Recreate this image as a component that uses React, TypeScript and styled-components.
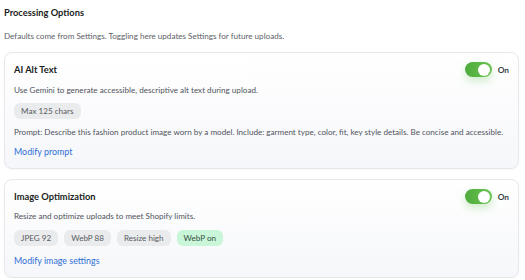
import React from "react";
import styled, { createGlobalStyle } from "styled-components";

const Global = createGlobalStyle`
  html, body { margin: 0; padding: 0; background: #ffffff; }
  body { font-family: Lato, "Noto Sans", sans-serif; color: #1f2328; }
  * { box-sizing: border-box; }
`;

const Page = styled.div`
  padding: 6px 6px 0 4px;
  display: flex;
  flex-direction: column;
`;

const Heading = styled.div`
  font-size: 9.3px;
  font-weight: 700;
  line-height: 14px;
  color: #1b1d21;
`;

const Sub = styled.div`
  margin-top: 10px;
  font-size: 8.1px;
  line-height: 13px;
  color: #5d6168;
`;

const Card = styled.div<{ $top: number }>`
  margin-top: ${(p) => p.$top}px;
  border: 1px solid #e6e8ec;
  border-radius: 8px;
  background: linear-gradient(180deg, #ffffff 0%, #f6f7fa 100%);
  box-shadow: 0 1px 2px rgba(20, 30, 50, 0.04);
  padding: 9px 9px 10px 9px;
  display: flex;
  flex-direction: column;
`;

const Header = styled.div`
  display: flex;
  align-items: center;
  justify-content: space-between;
  height: 15px;
`;

const Title = styled.div`
  font-size: 9.3px;
  font-weight: 700;
  color: #1b1d21;
`;

const ToggleWrap = styled.div`
  display: flex;
  align-items: center;
  gap: 6px;
`;

const Track = styled.div`
  position: relative;
  width: 27px;
  height: 15px;
  border-radius: 8px;
  background: linear-gradient(90deg, #4eab3c 0%, #6cc452 100%);
  box-shadow: 0 4px 8px rgba(90, 190, 70, 0.28);
`;

const Knob = styled.div`
  position: absolute;
  top: 1.5px;
  right: 1.5px;
  width: 12px;
  height: 12px;
  border-radius: 50%;
  background: #ffffff;
`;

const OnLabel = styled.span`
  font-size: 8.3px;
  font-weight: 700;
  color: #3a3f46;
`;

const Text = styled.div<{ $top: number }>`
  margin-top: ${(p) => p.$top}px;
  font-size: 8.1px;
  line-height: 13px;
  color: #50545b;
  white-space: nowrap;
`;

const Chips = styled.div<{ $top: number }>`
  margin-top: ${(p) => p.$top}px;
  display: flex;
  gap: 6px;
`;

const Chip = styled.span<{ $on?: boolean }>`
  display: inline-flex;
  align-items: center;
  height: 16px;
  padding: 0 7px;
  border-radius: 6px;
  font-size: 8.1px;
  background: ${(p) => (p.$on ? "#c9f5d8" : "#eaebed")};
  color: ${(p) => (p.$on ? "#35503f" : "#575b61")};
`;

const Link = styled.a<{ $top: number }>`
  margin-top: ${(p) => p.$top}px;
  font-size: 8.9px;
  line-height: 13px;
  color: #2f6fd6;
  text-decoration: none;
  align-self: flex-start;
`;

const Toggle = () => (
  <ToggleWrap>
    <Track>
      <Knob />
    </Track>
    <OnLabel>On</OnLabel>
  </ToggleWrap>
);

export default function App() {
  return (
    <>
      <Global />
      <Page>
        <Heading>Processing Options</Heading>
        <Sub>Defaults come from Settings. Toggling here updates Settings for future uploads.</Sub>
        <Card $top={9}>
          <Header>
            <Title>AI Alt Text</Title>
            <Toggle />
          </Header>
          <Text $top={7}>Use Gemini to generate accessible, descriptive alt text during upload.</Text>
          <Chips $top={6}>
            <Chip>Max 125 chars</Chip>
          </Chips>
          <Text $top={7}>
            Prompt: Describe this fashion product image worn by a model. Include: garment type, color, fit, key style details. Be concise and accessible.
          </Text>
          <Link $top={6}>Modify prompt</Link>
        </Card>
        <Card $top={10}>
          <Header>
            <Title>Image Optimization</Title>
            <Toggle />
          </Header>
          <Text $top={6}>Resize and optimize uploads to meet Shopify limits.</Text>
          <Chips $top={7}>
            <Chip>JPEG 92</Chip>
            <Chip>WebP 88</Chip>
            <Chip>Resize high</Chip>
            <Chip $on>WebP on</Chip>
          </Chips>
          <Link $top={8}>Modify image settings</Link>
        </Card>
      </Page>
    </>
  );
}
